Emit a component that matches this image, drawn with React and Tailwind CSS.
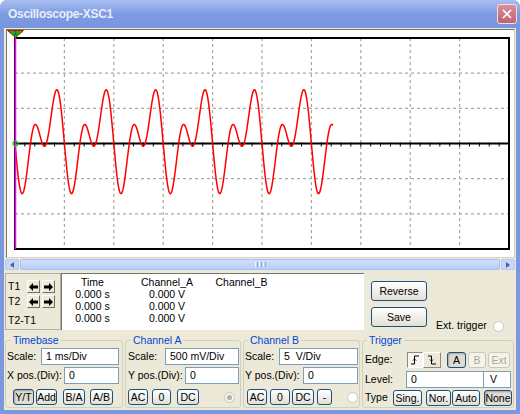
import { X } from "lucide-react";

// plot geometry, in svg units (svg origin sits at page x=7, y=30)
const LEFT = 8;
const TOP = 8;
const PW = 494;
const PH = 211;
const DIVX = PW / 10;
const DIVY = PH / 6;
const MID = TOP + PH / 2;

const wavePath = () => {
  let d = "";
  for (let t = 0; t <= 318; t += 0.5) {
    const th = (2 * Math.PI * t) / DIVX;
    const s = -Math.sin(th) - Math.sin(2 * th) - 0.15 * (Math.cos(th) - 1);
    const x = LEFT + t;
    const y = MID - 29.5 * s;
    d += (t === 0 ? "M" : "L") + x.toFixed(2) + " " + y.toFixed(2) + " ";
  }
  return d;
};

const Plot = () => {
  const vLines = [1, 2, 3, 4, 5, 6, 7, 8, 9].map((k) => LEFT + k * DIVX);
  const hLines = [1, 2, 4, 5].map((k) => TOP + k * DIVY);
  const ticks = [];
  for (let k = 1; k < 50; k++) ticks.push(LEFT + (k * DIVX) / 5);

  return (
    <svg width="507" height="227" className="block">
      {vLines.map((x) => (
        <line key={x} x1={x} y1={TOP} x2={x} y2={TOP + PH} stroke="#a8a8a8" strokeWidth="1.2" strokeDasharray="3 3" />
      ))}
      {hLines.map((y) => (
        <line key={y} x1={LEFT} y1={y} x2={LEFT + PW} y2={y} stroke="#a8a8a8" strokeWidth="1.2" strokeDasharray="3 3" />
      ))}
      <rect x={LEFT} y={TOP} width={PW} height={PH} fill="none" stroke="#000" strokeWidth="2" />
      <line x1={LEFT} y1={MID} x2={LEFT + PW} y2={MID} stroke="#000" strokeWidth="2" />
      {ticks.map((x) => (
        <line key={x} x1={x} y1={MID - 1} x2={x} y2={MID + 3} stroke="#000" strokeWidth="1" />
      ))}
      <path d={wavePath()} fill="none" stroke="#ff0000" strokeWidth="1.5" strokeLinejoin="round" />
      <line x1="8.5" y1="1" x2="8.5" y2={TOP + PH} stroke="#ff00ff" strokeWidth="1.5" />
      <circle cx="8.5" cy={MID} r="2.5" fill="none" stroke="#00e000" strokeWidth="1.2" />
      <polygon points="0.5,0.5 16.5,0.5 8.5,7.5" fill="#00c000" stroke="#e00000" strokeWidth="1" />
      <text x="8.5" y="5" fontSize="5" fill="#0000ff" textAnchor="middle" fontFamily="Liberation Sans">1</text>
    </svg>
  );
};

const Btn = ({ className, pressed, disabled, children }) => {
  let look = "border-[#1d4f80] bg-gradient-to-b from-[#ffffff] to-[#e2dfd4] text-black";
  if (pressed) look = "border-[#1d4f80] bg-[#dedcd3] text-black shadow-[inset_1px_1px_2px_rgba(0,0,0,0.25)]";
  if (disabled) look = "border-[#cbc8bb] bg-[#f5f4ea] text-[#aca899]";
  return (
    <div className={`h-[16px] shrink-0 flex items-center justify-center whitespace-nowrap rounded-[3px] border leading-none ${look} ${className}`}>
      {children}
    </div>
  );
};

const Field = ({ className, children }) => (
  <div className={`h-[17px] shrink-0 flex items-center pl-[4px] whitespace-nowrap border border-[#7f9db9] bg-white leading-none ${className}`}>
    {children}
  </div>
);

const Label = ({ className, children }) => (
  <span className={`shrink-0 whitespace-nowrap ${className}`}>{children}</span>
);

const Arrow = ({ flip }) => (
  <div className="w-[13px] h-[13px] flex items-center justify-center bg-[#ece9d8] border-t border-l border-white border-b border-r border-b-[#716f64] border-r-[#716f64]">
    <svg width="9" height="8" viewBox="0 0 9 8" className={flip ? "rotate-180" : ""}>
      <path d="M0 4 L4 0 L4 2.5 L9 2.5 L9 5.5 L4 5.5 L4 8 Z" fill="#000" />
    </svg>
  </div>
);

const Group = ({ title, legendClass, className, children }) => (
  <fieldset className={`h-[74px] shrink-0 border border-[#d0d0bf] rounded-[3px] ${className}`}>
    <legend className={`px-[2px] leading-[13px] text-[#0046d5] ${legendClass}`}>{title}</legend>
    {children}
  </fieldset>
);

const ScrollBtn = ({ right }) => (
  <div className="w-[14px] h-full rounded-[2px] border border-[#b4c8f6] bg-[#c5d5fc] flex items-center justify-center">
    <svg width="4" height="6" viewBox="0 0 4 6" className={right ? "" : "rotate-180"}>
      <path d="M0 0 L4 3 L0 6 Z" fill="#4d6185" />
    </svg>
  </div>
);

export default function App() {
  return (
    <div className="w-[520px] h-[414px] flex flex-col overflow-hidden rounded-t-[7px] bg-[#7b97e0] text-[10.5px] text-black font-['Liberation_Sans',Tahoma,sans-serif]">
      <div className="h-[28px] shrink-0 flex items-center justify-between pl-[8px] pr-[3px] bg-gradient-to-b from-[#a9bff0] via-[#7e9be2] to-[#7794de]">
        <span className="text-[12px] font-bold tracking-[-0.3px] text-[#e8eefb]">Oscilloscope-XSC1</span>
        <div className="w-[20px] h-[20px] rounded-[3px] border border-[#f1dfe2] bg-gradient-to-b from-[#d99099] to-[#c0626e] flex items-center justify-center">
          <X size={14} strokeWidth={3} color="#ffffff" />
        </div>
      </div>

      <div className="flex-1 mx-[4px] mb-[4px] bg-[#ece9d8] flex flex-col">
        <div className="mt-[1px] ml-[2px] mr-[1px] h-[229px] bg-white border border-t-[#77756a] border-l-[#77756a] border-r-[#d6d3c6] border-b-[#d6d3c6]">
          <Plot />
        </div>

        <div className="mt-[1px] ml-[1px] mr-[1px] h-[11px] flex gap-[1px]">
          <ScrollBtn />
          <div className="flex-1 rounded-[2px] border border-[#a9c0f4] bg-gradient-to-b from-[#d2defc] to-[#b9cdf9] flex items-center justify-center gap-[1px]">
            <div className="w-[1px] h-[5px] bg-[#eef3fe]" />
            <div className="w-[1px] h-[5px] bg-[#8ca6e0]" />
            <div className="w-[1px] h-[5px] bg-[#eef3fe]" />
            <div className="w-[1px] h-[5px] bg-[#8ca6e0]" />
            <div className="w-[1px] h-[5px] bg-[#eef3fe]" />
            <div className="w-[1px] h-[5px] bg-[#8ca6e0]" />
          </div>
          <ScrollBtn right />
        </div>

        <div className="mt-[3px] h-[57px] flex">
          <div className="ml-[1px] w-[56px] h-full border border-[#b3b0a2] pl-[2px] pt-[6px] leading-[13px]">
            <div className="flex items-center h-[13px]">
              <Label className="w-[19px]">T1</Label>
              <Arrow />
              <div className="w-[2px]" />
              <Arrow flip />
            </div>
            <div className="flex items-center h-[13px] mt-[2px]">
              <Label className="w-[19px]">T2</Label>
              <Arrow />
              <div className="w-[2px]" />
              <Arrow flip />
            </div>
            <div className="mt-[5px] leading-[14px] whitespace-nowrap">T2-T1</div>
          </div>

          <div className="w-[303px] h-full bg-white border-t border-l border-[#77756a] pl-[1px] pt-[2px] leading-[12px]">
            <div className="grid grid-cols-[59px_90px_59px] text-center whitespace-nowrap">
              <span>Time</span>
              <span>Channel_A</span>
              <span>Channel_B</span>
              <span>0.000 s</span>
              <span>0.000 V</span>
              <span />
              <span>0.000 s</span>
              <span>0.000 V</span>
              <span />
              <span>0.000 s</span>
              <span>0.000 V</span>
              <span />
            </div>
          </div>

          <div className="ml-[7px] w-[56px] flex flex-col">
            <Btn className="mt-[8px] h-[20px]">Reverse</Btn>
            <Btn className="mt-[6px] h-[20px]">Save</Btn>
          </div>

          <div className="ml-[9px] mt-[46px] h-[14px] flex items-center">
            <Label>Ext. trigger</Label>
            <div className="ml-[6px] w-[11px] h-[11px] rounded-full border border-[#c9c7ba] bg-white" />
          </div>
        </div>

        <div className="mt-[4px] flex">
          <Group title="Timebase" legendClass="ml-[5px]" className="ml-[1px] w-[118px]">
            <div className="flex items-center mt-[1px] pl-[1px]">
              <Label className="w-[34px]">Scale:</Label>
              <Field className="w-[78px]">1 ms/Div</Field>
            </div>
            <div className="flex items-center mt-[2px] pl-[1px]">
              <Label className="w-[57px]">X pos.(Div):</Label>
              <Field className="w-[55px]">0</Field>
            </div>
            <div className="flex mt-[5px] pl-[7px]">
              <Btn className="w-[21px]" pressed>Y/T</Btn>
              <Btn className="ml-[2px] w-[21px]">Add</Btn>
              <Btn className="ml-[6px] w-[22px]">B/A</Btn>
              <Btn className="ml-[5px] w-[23px]">A/B</Btn>
            </div>
          </Group>

          <Group title="Channel A" legendClass="ml-[5px]" className="ml-[2px] w-[116px]">
            <div className="flex items-center mt-[1px] pl-[2px]">
              <Label className="w-[37px]">Scale:</Label>
              <Field className="w-[74px]">500 mV/Div</Field>
            </div>
            <div className="flex items-center mt-[2px] pl-[2px]">
              <Label className="w-[57px]">Y pos.(Div):</Label>
              <Field className="w-[54px]">0</Field>
            </div>
            <div className="flex items-center mt-[5px] pl-[2px]">
              <Btn className="w-[20px]">AC</Btn>
              <Btn className="ml-[4px] w-[19px]">0</Btn>
              <Btn className="ml-[6px] w-[22px]">DC</Btn>
              <div className="ml-[25px] w-[11px] h-[11px] shrink-0 rounded-full border border-[#cbc8bb] bg-[#f4f3ee] flex items-center justify-center">
                <div className="w-[5px] h-[5px] rounded-full bg-[#b4b1a4]" />
              </div>
            </div>
          </Group>

          <Group title="Channel B" legendClass="ml-[4px]" className="ml-[2px] w-[117px]">
            <div className="flex items-center mt-[1px] pl-[1px]">
              <Label className="w-[34px]">Scale:</Label>
              <Field className="w-[79px]">5&nbsp;&nbsp;V/Div</Field>
            </div>
            <div className="flex items-center mt-[2px] pl-[1px]">
              <Label className="w-[58px]">Y pos.(Div):</Label>
              <Field className="w-[55px]">0</Field>
            </div>
            <div className="flex items-center mt-[5px] pl-[3px]">
              <Btn className="w-[20px]">AC</Btn>
              <Btn className="ml-[3px] w-[20px]">0</Btn>
              <Btn className="ml-[2px] w-[22px]">DC</Btn>
              <Btn className="ml-[3px] w-[15px]">-</Btn>
              <div className="ml-[15px] w-[11px] h-[11px] shrink-0 rounded-full border border-[#cbc8bb] bg-white" />
            </div>
          </Group>

          <Group title="Trigger" legendClass="ml-[4px]" className="ml-[2px] w-[152px]">
            <div className="flex items-center mt-[5px] pl-[2px]">
              <Label className="w-[42px]">Edge:</Label>
              <div className="w-[16px] h-[16px] shrink-0 flex items-center justify-center bg-[#f6f5f0] border-t border-l border-[#8c8a80] border-b border-r border-b-white border-r-white">
                <svg width="10" height="10" viewBox="0 0 10 10">
                  <path d="M1 9 H4.5 V1 H9" fill="none" stroke="#000" strokeWidth="1" />
                  <path d="M3 5.5 L4.5 4 L6 5.5" fill="none" stroke="#000" strokeWidth="1" />
                </svg>
              </div>
              <div className="w-[18px] h-[16px] shrink-0 flex items-center justify-center bg-[#ece9d8] border-t border-l border-white border-b border-r border-b-[#8c8a80] border-r-[#8c8a80]">
                <svg width="10" height="10" viewBox="0 0 10 10">
                  <path d="M1 1 H4.5 V9 H9" fill="none" stroke="#000" strokeWidth="1" />
                  <path d="M3 4.5 L4.5 6 L6 4.5" fill="none" stroke="#000" strokeWidth="1" />
                </svg>
              </div>
              <Btn className="ml-[6px] w-[19px]" pressed>A</Btn>
              <Btn className="ml-[2px] w-[18px]" disabled>B</Btn>
              <Btn className="ml-[2px] w-[22px]" disabled>Ext</Btn>
            </div>
            <div className="flex items-center mt-[3px] pl-[2px]">
              <Label className="w-[41px]">Level:</Label>
              <Field className="w-[78px] h-[16px]">0</Field>
              <Field className="w-[28px] h-[16px] -ml-[1px] pl-[6px]">V</Field>
            </div>
            <div className="flex items-center mt-[2px] pl-[2px]">
              <Label className="w-[28px]">Type</Label>
              <Btn className="w-[29px]">Sing.</Btn>
              <Btn className="ml-[4px] w-[25px]">Nor.</Btn>
              <Btn className="ml-[1px] w-[28px]">Auto</Btn>
              <Btn className="ml-[4px] w-[28px]" pressed>None</Btn>
            </div>
          </Group>
        </div>
      </div>
    </div>
  );
}
